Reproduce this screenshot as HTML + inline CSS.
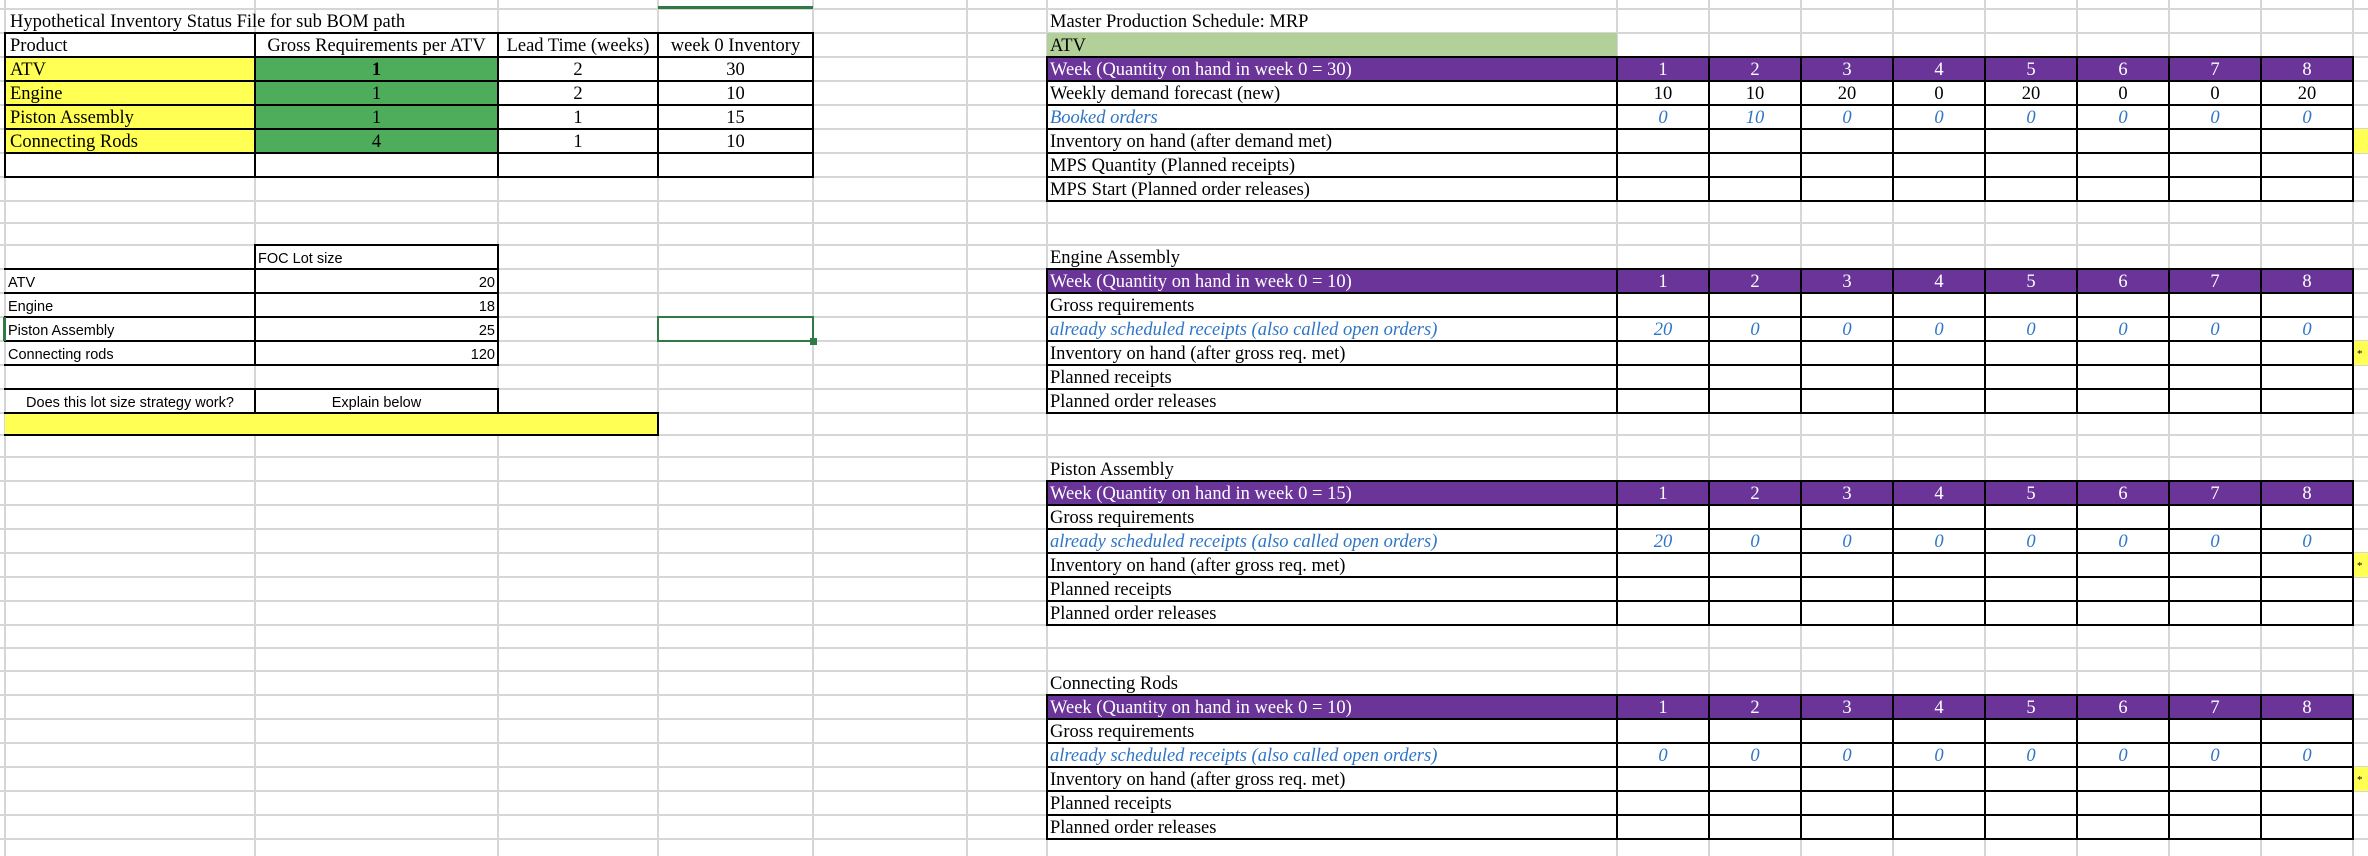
<!DOCTYPE html>
<html><head><meta charset="utf-8">
<style>
html,body{margin:0;padding:0;background:#fff;}
body{width:2368px;height:856px;position:relative;overflow:hidden;}
.g{position:absolute;background:#d6d6d6;}
.f{position:absolute;}
.b{position:absolute;border:2px solid #000;box-sizing:border-box;}
.h{position:absolute;background:#000;}
.t{position:absolute;height:24px;line-height:26px;font-family:"Liberation Serif",serif;font-size:18.5px;color:#000;white-space:nowrap;}
.c{text-align:center;width:92px;}
.i{font-style:italic;color:#2e75c6;}
.w{color:#fff;}
.s{position:absolute;height:24px;line-height:28px;font-family:"Liberation Sans",sans-serif;font-size:14.5px;color:#000;white-space:nowrap;}
</style></head><body>
<div id="grid"></div>

<div class="f" style="left:5px;top:57px;width:250px;height:96px;background:#ffff54"></div>
<div class="f" style="left:255px;top:57px;width:243px;height:96px;background:#4ead5b"></div>
<div class="f" style="left:1047px;top:33px;width:570px;height:24px;background:#b3d09a"></div>
<div class="f" style="left:1047px;top:57px;width:1306px;height:24px;background:#6a3499"></div>
<div class="f" style="left:1047px;top:269px;width:1306px;height:24px;background:#6a3499"></div>
<div class="f" style="left:1047px;top:481px;width:1306px;height:24px;background:#6a3499"></div>
<div class="f" style="left:1047px;top:695px;width:1306px;height:24px;background:#6a3499"></div>
<div class="f" style="left:5px;top:413px;width:653px;height:22px;background:#ffff54"></div>
<div class="f" style="left:2354px;top:129px;width:14px;height:24px;background:#ffff54"></div>
<div class="f" style="left:2354px;top:341px;width:14px;height:24px;background:#ffff54"></div>
<div class="f" style="left:2354px;top:553px;width:14px;height:24px;background:#ffff54"></div>
<div class="f" style="left:2354px;top:767px;width:14px;height:24px;background:#ffff54"></div>
<div class="f" style="left:658px;top:6px;width:155px;height:3px;background:#2f7a45"></div>

<div id="borders"></div>

<div class="f" style="left:657px;top:316px;width:157px;height:26px;border:2px solid #2f7a45;box-sizing:border-box"></div>
<div class="f" style="left:810px;top:338px;width:7px;height:7px;background:#2f7a45"></div>
<div class="f" style="left:3px;top:317px;width:3px;height:24px;background:#2f7a45"></div>

<div class="t" style="left:10px;top:9px">Hypothetical Inventory Status File for sub BOM path</div>
<div class="t" style="left:10px;top:33px">Product</div>
<div class="t" style="left:255px;top:33px;width:243px;text-align:center">Gross Requirements per ATV</div>
<div class="t" style="left:498px;top:33px;width:160px;text-align:center">Lead Time (weeks)</div>
<div class="t" style="left:658px;top:33px;width:155px;text-align:center">week 0 Inventory</div>
<div class="t" style="left:10px;top:57px">ATV</div>
<div class="t" style="left:10px;top:81px">Engine</div>
<div class="t" style="left:10px;top:105px">Piston Assembly</div>
<div class="t" style="left:10px;top:129px">Connecting Rods</div>
<div class="t" style="left:255px;top:57px;width:243px;text-align:center;font-weight:bold">1</div>
<div class="t" style="left:255px;top:81px;width:243px;text-align:center">1</div>
<div class="t" style="left:255px;top:105px;width:243px;text-align:center">1</div>
<div class="t" style="left:255px;top:129px;width:243px;text-align:center">4</div>
<div class="t" style="left:498px;top:57px;width:160px;text-align:center">2</div>
<div class="t" style="left:498px;top:81px;width:160px;text-align:center">2</div>
<div class="t" style="left:498px;top:105px;width:160px;text-align:center">1</div>
<div class="t" style="left:498px;top:129px;width:160px;text-align:center">1</div>
<div class="t" style="left:658px;top:57px;width:155px;text-align:center">30</div>
<div class="t" style="left:658px;top:81px;width:155px;text-align:center">10</div>
<div class="t" style="left:658px;top:105px;width:155px;text-align:center">15</div>
<div class="t" style="left:658px;top:129px;width:155px;text-align:center">10</div>

<div class="s" style="left:258px;top:245px">FOC Lot size</div>
<div class="s" style="left:8px;top:269px">ATV</div>
<div class="s" style="left:8px;top:293px">Engine</div>
<div class="s" style="left:8px;top:317px">Piston Assembly</div>
<div class="s" style="left:8px;top:341px">Connecting rods</div>
<div class="s" style="left:255px;top:269px;width:240px;text-align:right">20</div>
<div class="s" style="left:255px;top:293px;width:240px;text-align:right">18</div>
<div class="s" style="left:255px;top:317px;width:240px;text-align:right">25</div>
<div class="s" style="left:255px;top:341px;width:240px;text-align:right">120</div>
<div class="s" style="left:5px;top:389px;width:250px;text-align:center">Does this lot size strategy work?</div>
<div class="s" style="left:255px;top:389px;width:243px;text-align:center">Explain below</div>

<div class="t" style="left:1050px;top:9px">Master Production Schedule: MRP</div>
<div class="t" style="left:1050px;top:33px">ATV</div>
<div class="t w" style="left:1050px;top:57px">Week (Quantity on hand in week 0 = 30)</div>
<div class="t" style="left:1050px;top:81px">Weekly demand forecast (new)</div>
<div class="t i" style="left:1050px;top:105px">Booked orders</div>
<div class="t" style="left:1050px;top:129px">Inventory on hand (after demand met)</div>
<div class="t" style="left:1050px;top:153px">MPS Quantity (Planned receipts)</div>
<div class="t" style="left:1050px;top:177px">MPS Start (Planned order releases)</div>
<div class="t c w" style="left:1617px;top:57px">1</div><div class="t c w" style="left:1709px;top:57px">2</div><div class="t c w" style="left:1801px;top:57px">3</div><div class="t c w" style="left:1893px;top:57px">4</div><div class="t c w" style="left:1985px;top:57px">5</div><div class="t c w" style="left:2077px;top:57px">6</div><div class="t c w" style="left:2169px;top:57px">7</div><div class="t c w" style="left:2261px;top:57px">8</div>
<div class="t c" style="left:1617px;top:81px">10</div><div class="t c" style="left:1709px;top:81px">10</div><div class="t c" style="left:1801px;top:81px">20</div><div class="t c" style="left:1893px;top:81px">0</div><div class="t c" style="left:1985px;top:81px">20</div><div class="t c" style="left:2077px;top:81px">0</div><div class="t c" style="left:2169px;top:81px">0</div><div class="t c" style="left:2261px;top:81px">20</div>
<div class="t c i" style="left:1617px;top:105px">0</div><div class="t c i" style="left:1709px;top:105px">10</div><div class="t c i" style="left:1801px;top:105px">0</div><div class="t c i" style="left:1893px;top:105px">0</div><div class="t c i" style="left:1985px;top:105px">0</div><div class="t c i" style="left:2077px;top:105px">0</div><div class="t c i" style="left:2169px;top:105px">0</div><div class="t c i" style="left:2261px;top:105px">0</div>

<div class="t" style="left:1050px;top:245px">Engine Assembly</div>
<div class="t w" style="left:1050px;top:269px">Week (Quantity on hand in week 0 = 10)</div>
<div class="t" style="left:1050px;top:293px">Gross requirements</div>
<div class="t i" style="left:1050px;top:317px">already scheduled receipts (also called open orders)</div>
<div class="t" style="left:1050px;top:341px">Inventory on hand (after gross req. met)</div>
<div class="t" style="left:1050px;top:365px">Planned receipts</div>
<div class="t" style="left:1050px;top:389px">Planned order releases</div>
<div class="t c w" style="left:1617px;top:269px">1</div><div class="t c w" style="left:1709px;top:269px">2</div><div class="t c w" style="left:1801px;top:269px">3</div><div class="t c w" style="left:1893px;top:269px">4</div><div class="t c w" style="left:1985px;top:269px">5</div><div class="t c w" style="left:2077px;top:269px">6</div><div class="t c w" style="left:2169px;top:269px">7</div><div class="t c w" style="left:2261px;top:269px">8</div>
<div class="t c i" style="left:1617px;top:317px">20</div><div class="t c i" style="left:1709px;top:317px">0</div><div class="t c i" style="left:1801px;top:317px">0</div><div class="t c i" style="left:1893px;top:317px">0</div><div class="t c i" style="left:1985px;top:317px">0</div><div class="t c i" style="left:2077px;top:317px">0</div><div class="t c i" style="left:2169px;top:317px">0</div><div class="t c i" style="left:2261px;top:317px">0</div>
<div class="t" style="left:2357px;top:341px;font-size:11px">*</div>

<div class="t" style="left:1050px;top:457px">Piston Assembly</div>
<div class="t w" style="left:1050px;top:481px">Week (Quantity on hand in week 0 = 15)</div>
<div class="t" style="left:1050px;top:505px">Gross requirements</div>
<div class="t i" style="left:1050px;top:529px">already scheduled receipts (also called open orders)</div>
<div class="t" style="left:1050px;top:553px">Inventory on hand (after gross req. met)</div>
<div class="t" style="left:1050px;top:577px">Planned receipts</div>
<div class="t" style="left:1050px;top:601px">Planned order releases</div>
<div class="t c w" style="left:1617px;top:481px">1</div><div class="t c w" style="left:1709px;top:481px">2</div><div class="t c w" style="left:1801px;top:481px">3</div><div class="t c w" style="left:1893px;top:481px">4</div><div class="t c w" style="left:1985px;top:481px">5</div><div class="t c w" style="left:2077px;top:481px">6</div><div class="t c w" style="left:2169px;top:481px">7</div><div class="t c w" style="left:2261px;top:481px">8</div>
<div class="t c i" style="left:1617px;top:529px">20</div><div class="t c i" style="left:1709px;top:529px">0</div><div class="t c i" style="left:1801px;top:529px">0</div><div class="t c i" style="left:1893px;top:529px">0</div><div class="t c i" style="left:1985px;top:529px">0</div><div class="t c i" style="left:2077px;top:529px">0</div><div class="t c i" style="left:2169px;top:529px">0</div><div class="t c i" style="left:2261px;top:529px">0</div>
<div class="t" style="left:2357px;top:553px;font-size:11px">*</div>

<div class="t" style="left:1050px;top:671px">Connecting Rods</div>
<div class="t w" style="left:1050px;top:695px">Week (Quantity on hand in week 0 = 10)</div>
<div class="t" style="left:1050px;top:719px">Gross requirements</div>
<div class="t i" style="left:1050px;top:743px">already scheduled receipts (also called open orders)</div>
<div class="t" style="left:1050px;top:767px">Inventory on hand (after gross req. met)</div>
<div class="t" style="left:1050px;top:791px">Planned receipts</div>
<div class="t" style="left:1050px;top:815px">Planned order releases</div>
<div class="t c w" style="left:1617px;top:695px">1</div><div class="t c w" style="left:1709px;top:695px">2</div><div class="t c w" style="left:1801px;top:695px">3</div><div class="t c w" style="left:1893px;top:695px">4</div><div class="t c w" style="left:1985px;top:695px">5</div><div class="t c w" style="left:2077px;top:695px">6</div><div class="t c w" style="left:2169px;top:695px">7</div><div class="t c w" style="left:2261px;top:695px">8</div>
<div class="t c i" style="left:1617px;top:743px">0</div><div class="t c i" style="left:1709px;top:743px">0</div><div class="t c i" style="left:1801px;top:743px">0</div><div class="t c i" style="left:1893px;top:743px">0</div><div class="t c i" style="left:1985px;top:743px">0</div><div class="t c i" style="left:2077px;top:743px">0</div><div class="t c i" style="left:2169px;top:743px">0</div><div class="t c i" style="left:2261px;top:743px">0</div>
<div class="t" style="left:2357px;top:767px;font-size:11px">*</div>

<script>
(function(){
var rows=[9,33,57,81,105,129,153,177,201,223,245,269,293,317,341,365,389,413,435,457,481,505,529,553,577,601,625,648,671,695,719,743,767,791,815,839];
var cols=[5,255,498,658,813,967,1047,1617,1709,1801,1893,1985,2077,2169,2261,2353];
var g=document.getElementById('grid'),h='';
rows.forEach(function(y){h+='<div class="g" style="left:0;top:'+(y-1)+'px;width:2368px;height:2px"></div>';});
cols.forEach(function(x){h+='<div class="g" style="left:'+(x-1)+'px;top:0;width:2px;height:856px"></div>';});
g.innerHTML=h;
var b='';
function box(x1,y1,x2,y2){b+='<div class="b" style="left:'+(x1-1)+'px;top:'+(y1-1)+'px;width:'+(x2-x1+2)+'px;height:'+(y2-y1+2)+'px"></div>';}
function hl(x1,x2,y){b+='<div class="h" style="left:'+(x1-1)+'px;top:'+(y-1)+'px;width:'+(x2-x1+2)+'px;height:2px"></div>';}
function vl(x,y1,y2){b+='<div class="h" style="left:'+(x-1)+'px;top:'+(y1-1)+'px;width:2px;height:'+(y2-y1+2)+'px"></div>';}
var lr=[33,57,81,105,129,153,177],lc=[5,255,498,658,813];
for(var i=0;i<lr.length-1;i++)for(var j=0;j<lc.length-1;j++)box(lc[j],lr[i],lc[j+1],lr[i+1]);
var wc=[1047,1617,1709,1801,1893,1985,2077,2169,2261,2353];
[57,269,481,695].forEach(function(s){for(var i=0;i<6;i++)for(var j=0;j<wc.length-1;j++)box(wc[j],s+24*i,wc[j+1],s+24*(i+1));});
box(255,245,498,269);
[269,293,317,341,365].forEach(function(y){hl(5,498,y);});
vl(255,245,365);vl(498,245,365);
hl(5,498,389);vl(255,389,413);vl(498,389,413);
hl(5,658,413);hl(5,658,435);vl(658,413,435);
document.getElementById('borders').innerHTML=b;
})();
</script>
</body></html>
